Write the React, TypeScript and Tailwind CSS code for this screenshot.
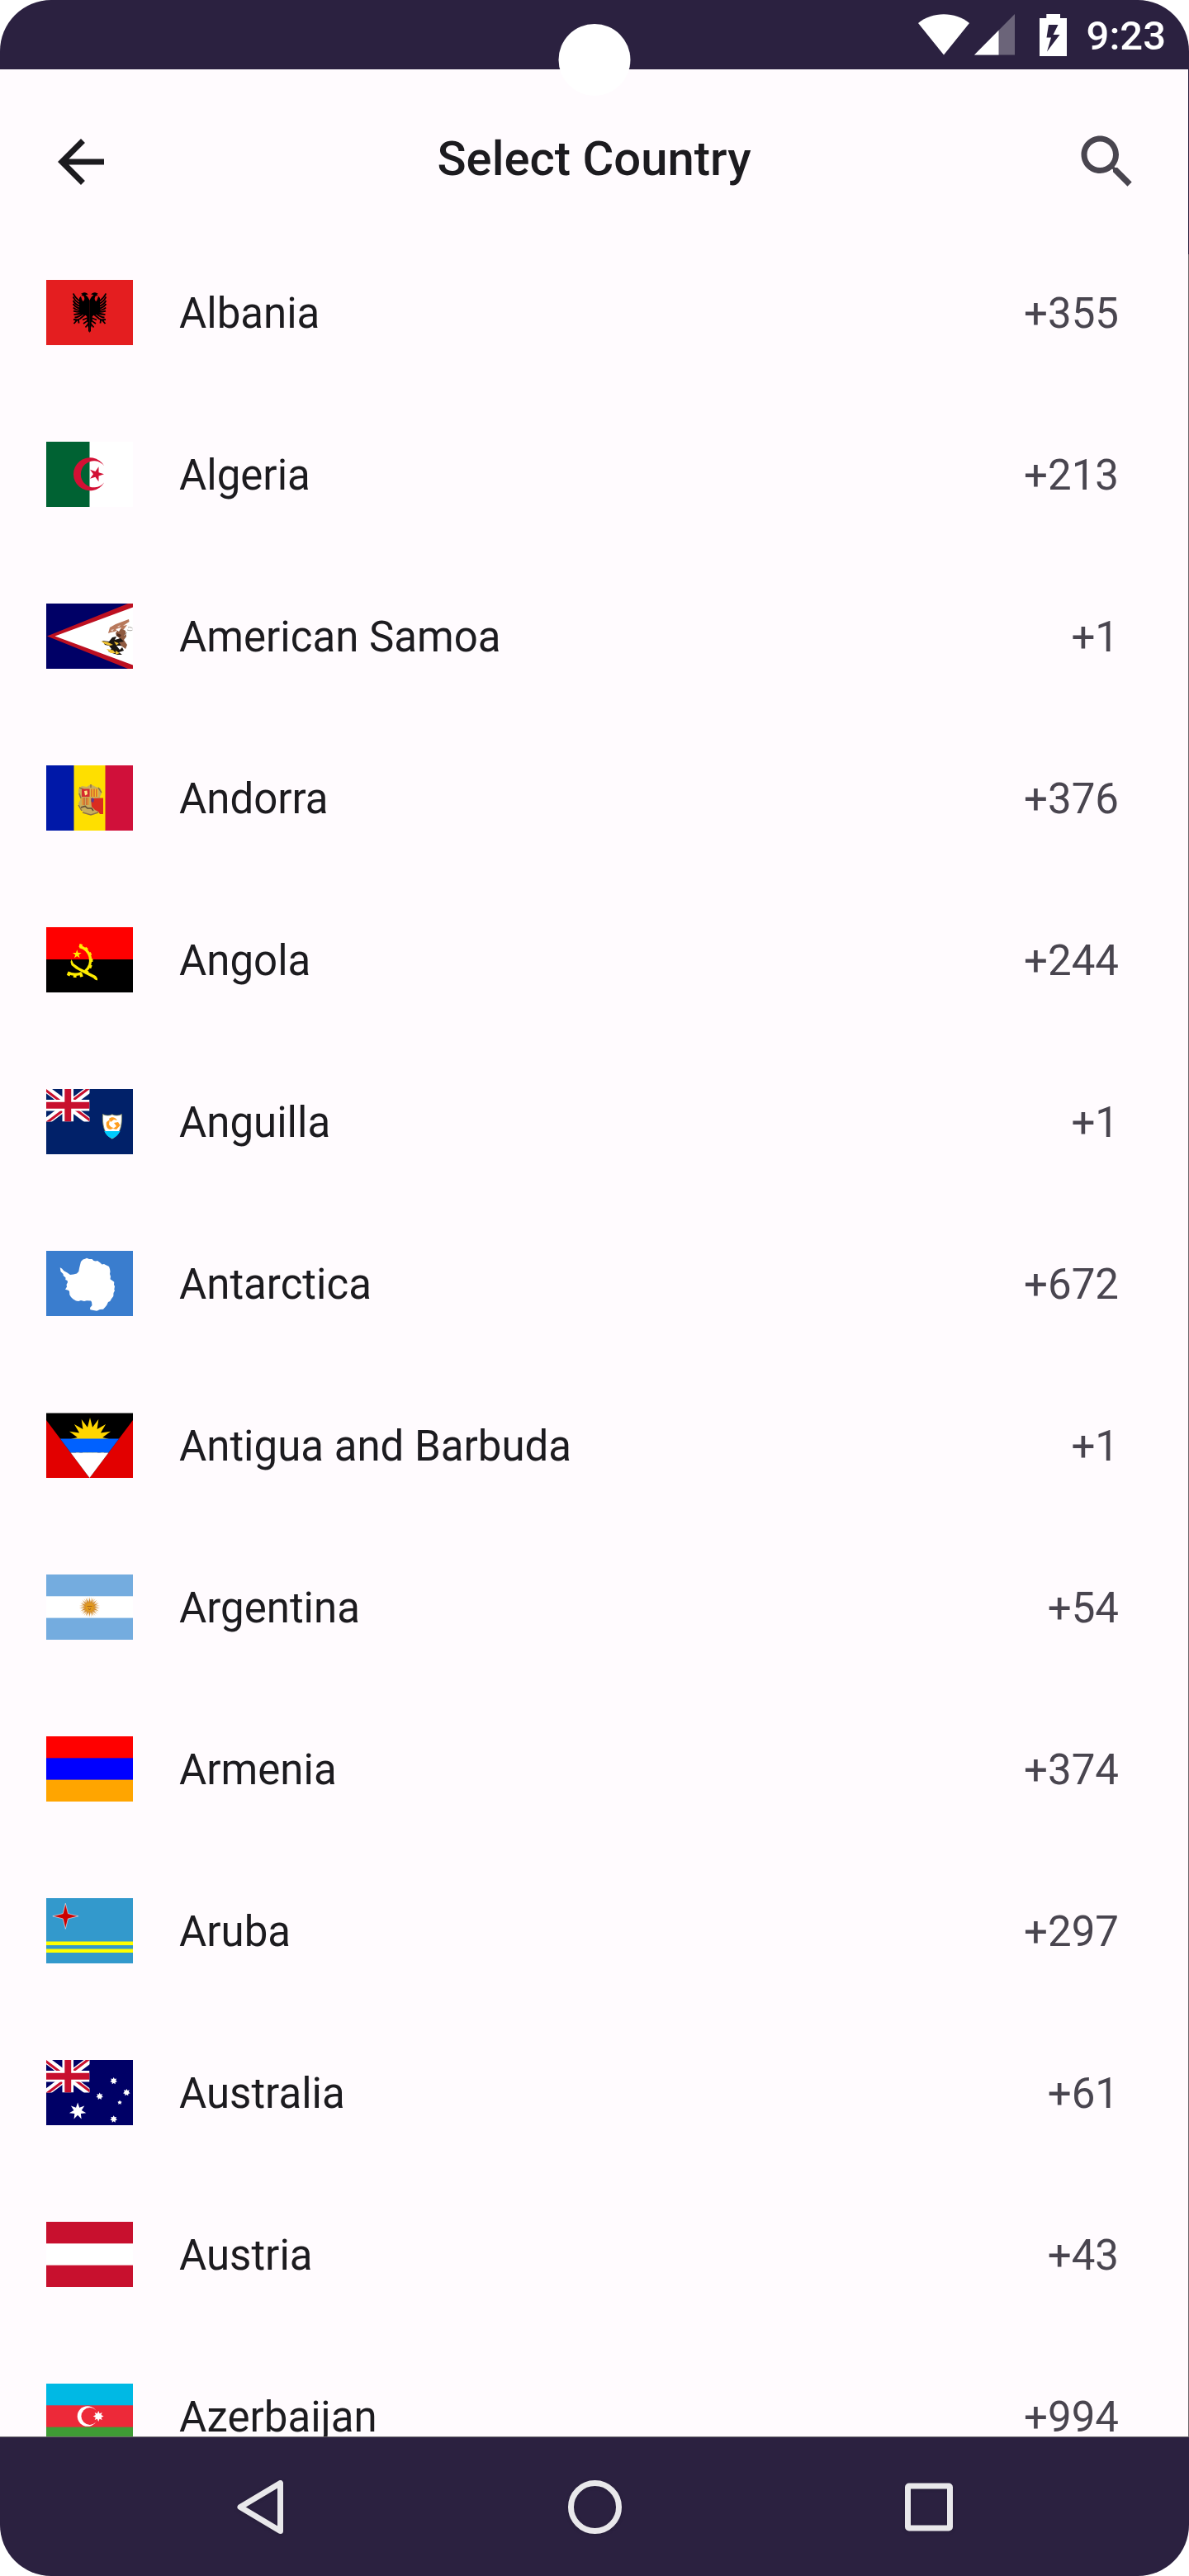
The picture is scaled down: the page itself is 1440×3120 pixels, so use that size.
import type { ReactNode } from "react";

/** Points of a regular star; `rot` is the angle of the first tip in degrees. */
function star(cx: number, cy: number, tips: number, outer: number, inner: number, rot = -90) {
  return Array.from({ length: tips * 2 }, (_, i) => {
    const a = ((rot + (i * 180) / tips) * Math.PI) / 180;
    const r = i % 2 ? inner : outer;
    return `${(cx + r * Math.cos(a)).toFixed(2)},${(cy + r * Math.sin(a)).toFixed(2)}`;
  }).join(" ");
}

function Bands({ colors }: { colors: [string, string, string] }) {
  return (
    <>
      <rect width="105" height="79" fill={colors[0]} />
      <rect y="26.3" width="105" height="52.7" fill={colors[1]} />
      <rect y="52.6" width="105" height="26.4" fill={colors[2]} />
    </>
  );
}

function UnionCanton({ blue }: { blue: string }) {
  return (
    <svg width="52.5" height="39.5" viewBox="0 0 52.5 39.5">
      <rect width="52.5" height="39.5" fill={blue} />
      <path d="M0 0L52.5 39.5M52.5 0L0 39.5" stroke="#fff" strokeWidth="8.5" />
      <path
        d="M-1 1.2L19 16.2M53 -2L33 13M53.5 38.3L33.5 23.3M-.5 41.5L19.5 26.5"
        stroke="#c8102e"
        strokeWidth="3"
      />
      <path d="M26.25 0V39.5M0 19.75H52.5" stroke="#fff" strokeWidth="13.6" />
      <path d="M26.25 0V39.5M0 19.75H52.5" stroke="#c8102e" strokeWidth="7.9" />
    </svg>
  );
}

const albanianWing = (
  <>
    <path d="M52.600 25C51 22 50 19.500 47.500 18.500C48.500 17.500 49.800 17.500 50.800 18C49.500 15.200 45.500 14.400 43.500 16.200L42 16.800L43.800 17.800L42.300 19.200L45 19.200C47 21.500 46.500 25 44.500 26C42.500 23.500 43 21 41.500 20L40 22V39L44 42L48 43L49.500 45L49 49L50.300 51V56L51 58V62L52.600 63.700Z" />
    <path
      d="M41 26C37 23 34 20 32.800 16.500M41 29C37 27 34 24 32.700 20.500M41 32C37 30.500 34 28 32.700 25M41 35C37 33.500 34 32 32.700 29M41 37C37 36.500 34.500 35.500 32.900 33.500M42 39C38 39 35 38.500 33 37.700M43 40C39 41.500 36 42 33.500 41.800M45 40C41 44 38 45.500 34.500 45.500"
      fill="none"
      stroke="#000"
      strokeWidth="1.900"
    />
    <path
      d="M47 42L41 47L35 49.500M38 48.500L33 48M37 49L33.500 53M39 48.500L39.500 52.500"
      fill="none"
      stroke="#000"
      strokeWidth="1.800"
    />
    <path d="M50 46L44 48.500M50 49.500L45 53M51 53L47.500 57.500" fill="none" stroke="#000" strokeWidth="1.600" />
  </>
);

const flags: Record<string, ReactNode> = {
  Albania: (
    <>
      <rect width="105" height="79" fill="#e41e20" />
      <g>{albanianWing}</g>
      <g transform="translate(105 0) scale(-1 1)">{albanianWing}</g>
    </>
  ),
  Algeria: (
    <>
      <rect width="105" height="79" fill="#fff" />
      <rect width="52.5" height="79" fill="#006233" />
      <path d="M70.300 29.300A20 20 0 1 0 70.300 49.300A16 16 0 1 1 70.300 29.300Z" fill="#d21034" />
      <polygon points={star(60.6, 39.3, 5, 9.4, 3.6, 0)} fill="#d21034" />
    </>
  ),
  "American Samoa": (
    <>
      <rect width="105" height="79" fill="#006" />
      <path d="M1 39.500L99 0H105V79H99Z" fill="#bd1021" />
      <path d="M10.500 39.500L105 4.500V74.500Z" fill="#fff" />
      <path d="M75 36L77 29L84 25L100 19L100.500 22L93 27L98 26L94 31L88 31L83 34L78 35Z" fill="#b8795c" />
      <path d="M84 36C86 31 91 29 96 33L97 40L94 44L98 50L96 55L92 52L88 50L86 45L89 42L85 39Z" fill="#8f5a40" />
      <path d="M84 31L91 29L88 34Z" fill="#fff" />
      <path d="M86 28L90 26L88 29ZM78 32L82 31L80 34Z" fill="#e9cdbf" />
      <path d="M68 45L76 46L80 41L85 40L83 44L90 42L94 46L88 47L91 51L85 51L89 56L92 53L94 57L88 59L92 62L86 62L80 60L75 58L79 55L76 51L71 50Z" fill="#1c1712" />
      <path d="M66 45.500L74 46.500L81 50L77 51L71 49ZM82 46L88 48L85 50.500ZM73 55L81 56.500L84 60L78 60ZM84 57L89 60L84 62Z" fill="#f2c433" />
      <path d="M86 36L91 38L89 41L85 39Z" fill="#4f2c1d" />
      <path d="M99 29C101 28 103 29 104.500 30M98 32C101 33 103 33 104.500 32M98 35L94 39" stroke="#a9a5a0" fill="none" />
    </>
  ),
  Andorra: (
    <>
      <rect width="105" height="79" fill="#d0103a" />
      <rect width="71.500" height="79" fill="#fedf00" />
      <rect width="33.500" height="79" fill="#0018a8" />
      <path d="M39 29L43 25L49 26L54 23L60 26L66 28L67 34L65 38L68 46L66 56L60 58L54 60L46 57L41 53L39 46L42 40L39 35Z" fill="#c9ae5c" />
      <path d="M40 27L45 29M63 27L67 33M39 48L43 55M44 57L54 60L63 57M40 34L42 40M54 23V27" stroke="#8d7347" strokeWidth="1.500" fill="none" />
      <path d="M43 28.500H52.500V38H43Z" fill="#d52b2f" />
      <path d="M46 31L49.500 30.500L50 35L47 36.500Z" fill="#ffe98a" />
      <path d="M53.500 28.500H63V38H53.500Z" fill="#f6c52c" />
      <path d="M55 28.500V38M58 28.500V38M61 28.500V38M46 39V48M49 39V48" stroke="#cf5a2c" strokeWidth="1.400" />
      <path d="M44 39V48M51 39V48" stroke="#e8922c" strokeWidth="1.600" />
      <path d="M54 40L69 39.500V59H65L63 56L59 54L55 50Z" fill="#da2c20" />
      <path d="M55 39L58 41L57 45L54.500 44Z" fill="#553a94" />
      <path d="M42 51L47 49.500L50 52L55 52L57 55" stroke="#5d4a36" strokeWidth="1.600" fill="none" />
    </>
  ),
  Angola: (
    <>
      <rect width="105" height="79" fill="#000" />
      <rect width="105" height="39" fill="#f00" />
      <path d="M40.500 23.500A17 17 0 0 1 47 53.500M43 55.500A20 20 0 0 1 26 55" fill="none" stroke="#ffec00" strokeWidth="3.400" />
      <path d="M40 22A19.300 19.300 0 0 1 49 54M44 57.500A20.500 20.500 0 0 1 24.500 55" fill="none" stroke="#ffec00" strokeWidth="4.200" strokeDasharray="3.600 4" />
      <polygon points={star(37.3, 32.8, 5, 5.6, 2.2)} fill="#ffec00" />
      <path d="M30.500 39L33 44L40 49L49 53.500L60 59L62 62V64.500L59 63.500L57 61.500L48 57L36 50.500L30.500 46L29.500 42Z" fill="#ffec00" />
    </>
  ),
  Anguilla: (
    <>
      <rect width="105" height="79" fill="#012169" />
      <UnionCanton blue="#012169" />
      <path d="M68.500 30.500C72 32.500 77 32.500 79.800 30.800C83 32.500 88 32.500 91.300 30.500C92 42 90.500 55 79.800 60.200C69.500 55 67.800 42 68.500 30.500Z" fill="#fff" stroke="#8a8f5a" strokeWidth=".8" />
      <path d="M70.300 51H89.500C87.500 55.500 84 58.500 79.800 60C75.500 58.500 72 55.500 70.300 51Z" fill="#00ccfe" />
      <path d="M76 36C79 33 84 34 86 38L82 37L78 40ZM73 40L77 37L76 43C78 47 82 47 82 47L78 49C74 49 72 45 73 40ZM82 41L87 40L89.500 44L85 49L81 48L85 45Z" fill="#ff9d1e" />
    </>
  ),
  Antarctica: (
    <>
      <rect width="105" height="79" fill="#3a7dce" />
      <path
        d="M16.700 20.300L19 21.500L21.300 24.300L25.500 26.500L29 29L33 28.500L37 27.500L39.300 25L40 21L41 17L42 13L44.500 10.500L47 9.800L49 8.700L52 10L55.500 10L57.500 12L60 12.500L62 12L65.500 14.500L67.500 16.500L70 16L73 17.500L76 19L77 22L77.500 25L77 28L78 31L77.500 34.300L80 36L82.300 37.700L82 41L83 43L82.300 46.700L83 48L81.500 51L81.300 55L79 58L77.300 61L75 62L73.300 65.700L71.500 68L69 70.700L65 71L61.300 72.700L57 72L53.300 71.300L53 69L55.500 66L55 62L54 60.500L49 60.300L46 61L42 60L39 61L36 60.500L32.300 58.300L30 56L28.300 53.300L28 49L26.700 47.700L23 46.700L25 43.500L24.500 41L26 38L25.500 36L23.300 35L23.500 32.500L20.700 30L20.500 28L17.500 25Z"
        fill="#fff"
      />
    </>
  ),
  "Antigua and Barbuda": (
    <>
      <rect width="105" height="79" fill="#e20000" />
      <path d="M0 0H105V9L52.500 79L0 9Z" fill="#000" />
      <polygon points={star(53, 33, 16, 27, 15.5)} fill="#ffd600" />
      <path d="M16.900 31.500H88.100L75.400 48.500H29.600Z" fill="#0061ff" />
      <path d="M29.600 48.500H75.400L52.500 79Z" fill="#fff" />
      <rect width="105" height="1" fill="#7f7e7f" />
    </>
  ),
  Argentina: (
    <>
      <Bands colors={["#74acdf", "#fff", "#74acdf"]} />
      <polygon points={star(52.5, 39.5, 32, 12.8, 6.5)} fill="#dca65a" opacity=".8" />
      <polygon points={star(52.5, 39.5, 16, 11, 5.5)} fill="#d18b2c" />
      <circle cx="52.500" cy="39.500" r="5.200" fill="#e29a1c" />
      <path d="M49.500 38.500H55.500M51 41L52.500 43L54 41" stroke="#a5631b" fill="none" />
    </>
  ),
  Armenia: <Bands colors={["#f00", "#00f", "#ffa500"]} />,
  Aruba: (
    <>
      <rect width="105" height="79" fill="#39c" />
      <path d="M0 54.800H105M0 63.800H105" stroke="#ff0" strokeWidth="4.600" />
      <polygon points={star(23.3, 21.8, 4, 15.5, 4.4)} fill="#c00" stroke="#fff" strokeOpacity=".7" strokeWidth=".8" />
    </>
  ),
  Australia: (
    <>
      <rect width="105" height="79" fill="#006" />
      <UnionCanton blue="#006" />
      <g fill="#fff">
        <polygon points={star(38.1, 62, 7, 10.5, 4.8)} />
        <polygon points={star(81.7, 25.3, 7, 4.4, 2.6)} />
        <polygon points={star(97.3, 39.3, 7, 4.4, 2.6)} />
        <polygon points={star(64.7, 44, 7, 4.4, 2.6)} />
        <polygon points={star(81.7, 71.7, 7, 4.4, 2.6)} />
        <polygon points={star(89, 51.5, 5, 2.8, 1.6)} />
      </g>
    </>
  ),
  Austria: <Bands colors={["#c8102e", "#fff", "#c8102e"]} />,
  Azerbaijan: (
    <>
      <Bands colors={["#00b9e4", "#ed2939", "#3f9c35"]} />
      <circle cx="50" cy="39.500" r="12.300" fill="#fff" />
      <circle cx="52.800" cy="39.500" r="10.400" fill="#ed2939" />
      <polygon points={star(63.2, 39.5, 8, 6.4, 3.6)} fill="#fff" />
    </>
  ),
};

const countries = [
  { name: "Albania", code: "+355" },
  { name: "Algeria", code: "+213" },
  { name: "American Samoa", code: "+1" },
  { name: "Andorra", code: "+376" },
  { name: "Angola", code: "+244" },
  { name: "Anguilla", code: "+1" },
  { name: "Antarctica", code: "+672" },
  { name: "Antigua and Barbuda", code: "+1" },
  { name: "Argentina", code: "+54" },
  { name: "Armenia", code: "+374" },
  { name: "Aruba", code: "+297" },
  { name: "Australia", code: "+61" },
  { name: "Austria", code: "+43" },
  { name: "Azerbaijan", code: "+994" },
];

function StatusBar() {
  return (
    <div className="relative flex h-[84px] shrink-0 items-center justify-end bg-[#2b2140] pr-7 text-white">
      <svg className="mr-1.5" width="62" height="50" viewBox="0 0 62 50" aria-hidden="true">
        <path d="M0 11C17 -3.500 45 -3.500 62 11L31 49.500Z" fill="currentColor" />
      </svg>
      <svg className="mr-[30px]" width="49" height="50" viewBox="0 0 49 50" aria-hidden="true">
        <path d="M49 0V49.500H0Z" fill="currentColor" opacity=".3" />
        <path d="M29.500 19.700V49.500H0Z" fill="currentColor" />
      </svg>
      <svg className="mr-6" width="33" height="51" viewBox="0 0 33 51" aria-hidden="true">
        <path
          d="M8.300 0H25V5H33V51H0V5H8.300ZM11 13L8.500 28.500H14L9 45.500L24.500 25H16.500L22.500 13Z"
          fill="currentColor"
          fillRule="evenodd"
        />
      </svg>
      <span className="pt-0.5 text-[49px] leading-none font-medium">9:23</span>
      <div className="absolute top-[29px] left-1/2 z-10 size-[87px] -translate-x-1/2 rounded-full bg-white" />
    </div>
  );
}

function TopBar() {
  return (
    <header className="flex h-[224px] shrink-0 items-center justify-between border-r border-[#2b2140] px-14 text-[#1c1b1f]">
      <button type="button" aria-label="Back" className="size-[84px]">
        <svg viewBox="0 0 24 24" fill="currentColor" aria-hidden="true">
          <path d="M20 11H7.830l5.590-5.590L12 4l-8 8 8 8 1.410-1.410L7.830 13H20v-2z" />
        </svg>
      </button>
      <h1 className="pb-2 text-[58px] leading-none font-medium">Select Country</h1>
      <button type="button" aria-label="Search" className="size-[84px] text-[#49454f]">
        <svg viewBox="0 0 24 24" fill="currentColor" aria-hidden="true">
          <path d="M15.500 14h-.79l-.28-.27C15.410 12.590 16 11.110 16 9.500 16 5.910 13.090 3 9.500 3S3 5.910 3 9.500 5.910 16 9.500 16c1.610 0 3.090-.59 4.230-1.570l.27.28v.79l5 4.990L20.490 19l-4.990-5zm-6 0C7.010 14 5 11.990 5 9.500S7.010 5 9.500 5 14 7.010 14 9.500 11.990 14 9.500 14z" />
        </svg>
      </button>
    </header>
  );
}

function CountryList() {
  return (
    <main className="min-h-0 flex-1 overflow-y-auto border-r border-b border-[#6b676c] [scrollbar-width:none]">
      <ul className="flex flex-col gap-[117px] pt-[31px] pb-14">
        {countries.map(({ name, code }) => (
          <li key={name}>
            <button
              type="button"
              className="flex w-full items-center gap-14 pr-[84px] pl-14 text-left text-[51px] leading-none text-[#1c1b1f]"
            >
              <svg className="shrink-0" width="105" height="79" viewBox="0 0 105 79" aria-hidden="true">
                {flags[name]}
              </svg>
              <span className="flex-1 pt-0.5">{name}</span>
              <span className="pt-0.5 text-[#49454f]">{code}</span>
            </button>
          </li>
        ))}
      </ul>
    </main>
  );
}

function NavigationBar() {
  return (
    <nav className="flex h-[168px] shrink-0 items-center bg-[#2b2140] px-28 text-[#e9e8eb]">
      <button type="button" aria-label="Navigate back" className="flex flex-1 justify-center">
        <svg className="drop-shadow-sm" width="70" height="70" viewBox="0 0 70 70" fill="none" aria-hidden="true">
          <path d="M59.500 6.500V64.500L11 35.500Z" stroke="currentColor" strokeWidth="7" strokeLinejoin="round" />
        </svg>
      </button>
      <button type="button" aria-label="Home" className="flex flex-1 justify-center">
        <svg className="drop-shadow-sm" width="70" height="70" viewBox="0 0 70 70" fill="none" aria-hidden="true">
          <circle cx="35.500" cy="35.500" r="29" stroke="currentColor" strokeWidth="7" />
        </svg>
      </button>
      <button type="button" aria-label="Recent apps" className="flex flex-1 justify-center">
        <svg className="drop-shadow-sm" width="70" height="70" viewBox="0 0 70 70" fill="none" aria-hidden="true">
          <rect x="9.500" y="10" width="51" height="51" rx="1.500" stroke="currentColor" strokeWidth="7" />
        </svg>
      </button>
    </nav>
  );
}

export default function App() {
  return (
    <div className="h-screen bg-white font-['Roboto',sans-serif]">
      <div className="flex h-full flex-col overflow-hidden rounded-[62px] bg-[#fffbfe]">
        <StatusBar />
        <TopBar />
        <CountryList />
        <NavigationBar />
      </div>
    </div>
  );
}
